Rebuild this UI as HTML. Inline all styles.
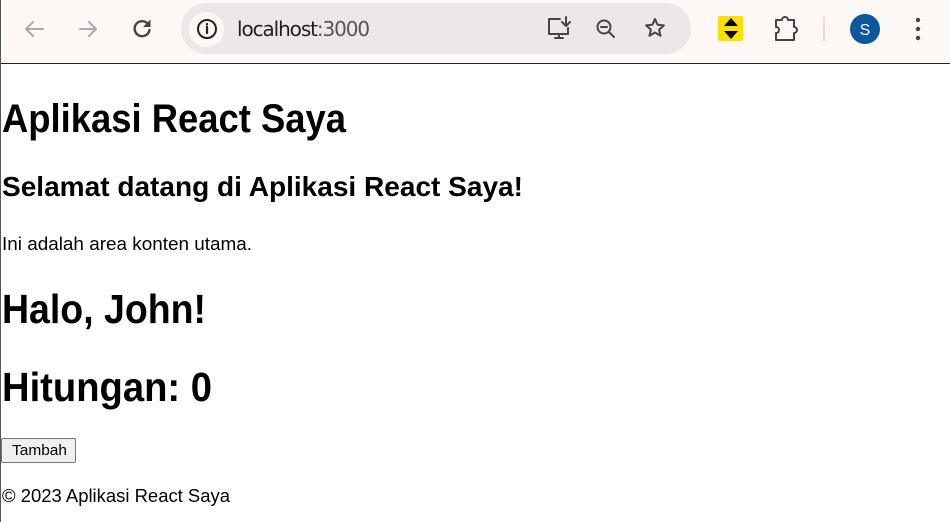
<!DOCTYPE html>
<html><head><meta charset="utf-8"><style>
html,body{margin:0;padding:0;width:950px;height:522px;overflow:hidden;background:#fff;font-family:"Liberation Sans",sans-serif}
.bar{position:absolute;left:0;top:0;width:950px;height:63px;background:#fdf7f5}
.line{position:absolute;left:0;top:63px;width:950px;height:1px;background:#222}
.lb{position:absolute;left:0;top:0;width:1px;height:522px;background:#555}
.omni{position:absolute;left:181px;top:3px;width:510px;height:51px;border-radius:26px;background:#ede7e8}
.info{position:absolute;left:189px;top:12px;width:35px;height:35px;border-radius:50%;background:#fdf7f5}
.url{position:absolute;left:237px;top:17px;font-size:20px;color:#1f1f1f;font-family:"DejaVu Sans","Liberation Sans",sans-serif;letter-spacing:-1.1px}
.url span{color:#555}
.btn{position:absolute;left:1px;top:438px;width:73px;height:23px;border:1px solid #767676;border-radius:2px;background:#efefef;box-sizing:content-box}
</style></head><body>
<div class="bar"></div>
<div class="omni"></div>
<div class="info"></div>
<div class="url">localhost<span>:3000</span></div>
<svg width="950" height="64" style="position:absolute;left:0;top:0" fill="none" stroke-linecap="round" stroke-linejoin="round">
 <g stroke="#aaa" stroke-width="2"><path d="M43 29H26M33 22l-7 7 7 7"/><path d="M80 29h16M89 22l7 7-7 7"/></g>
 <path d="M148 24A7.5 7.5 0 1 0 149.5 30" stroke="#444" stroke-width="2.4"/>
 <path d="M150.5 19.5v7.5h-7.5z" fill="#444"/>
 <circle cx="207" cy="29" r="9" stroke="#222" stroke-width="2"/><path d="M207 27v6M207 24v.5" stroke="#222" stroke-width="2.2"/>
 <g stroke="#444" stroke-width="2"><path d="M560 19h-11v15h19v-6"/><path d="M555 38h8M559 34v4"/><path d="M566 17v9M562 22l4 4 4-4"/></g>
 <g stroke="#444" stroke-width="2"><circle cx="604" cy="27" r="6.5"/><path d="M601 27h6M609 32l5 5"/></g>
 <path d="M655 19l2.6 5.8 6.3.6-4.8 4.2 1.4 6.2-5.5-3.3-5.5 3.3 1.4-6.2-4.8-4.2 6.3-.6z" stroke="#444" stroke-width="2"/>
 <rect x="718" y="16" width="25" height="25" rx="2" fill="#fde000"/>
 <path d="M731 18l-7 8h14zM731 39l-7-8h14z" fill="#000"/>
 <path d="M776 20h6a3 3 0 0 1 6 0h6v7a3 3 0 0 1 0 6v7h-18v-7a3 3 0 0 0 0-6z" stroke="#444" stroke-width="2"/>
 <rect x="823" y="17" width="2" height="24" fill="#f6d6cc"/>
 <circle cx="865" cy="29" r="15" fill="#0b57a0"/>
 <text x="865" y="35" font-family="Liberation Sans" font-size="16" fill="#fff" text-anchor="middle">S</text>
 <g fill="#444"><circle cx="918" cy="20" r="2.2"/><circle cx="918" cy="29" r="2.2"/><circle cx="918" cy="38" r="2.2"/></g>
</svg>
<div class="line"></div>
<div class="btn"></div>
<svg width="950" height="522" style="position:absolute;left:0;top:0" font-family="Liberation Sans, sans-serif" fill="#000">
 <text x="2" y="132" font-size="40" font-weight="bold" textLength="344" lengthAdjust="spacingAndGlyphs">Aplikasi React Saya</text>
 <text x="2" y="196" font-size="28" font-weight="bold" textLength="521" lengthAdjust="spacingAndGlyphs">Selamat datang di Aplikasi React Saya!</text>
 <text x="2" y="250" font-size="18" textLength="250" lengthAdjust="spacingAndGlyphs">Ini adalah area konten utama.</text>
 <text x="2" y="323" font-size="41" font-weight="bold" textLength="204" lengthAdjust="spacingAndGlyphs">Halo, John!</text>
 <text x="2" y="401" font-size="41" font-weight="bold" textLength="210" lengthAdjust="spacingAndGlyphs">Hitungan: 0</text>
 <text x="12" y="455" font-size="15" textLength="55" lengthAdjust="spacingAndGlyphs">Tambah</text>
 <text x="2" y="502" font-size="18" textLength="228" lengthAdjust="spacingAndGlyphs">© 2023 Aplikasi React Saya</text>
</svg>
<div class="lb"></div>
</body></html>
